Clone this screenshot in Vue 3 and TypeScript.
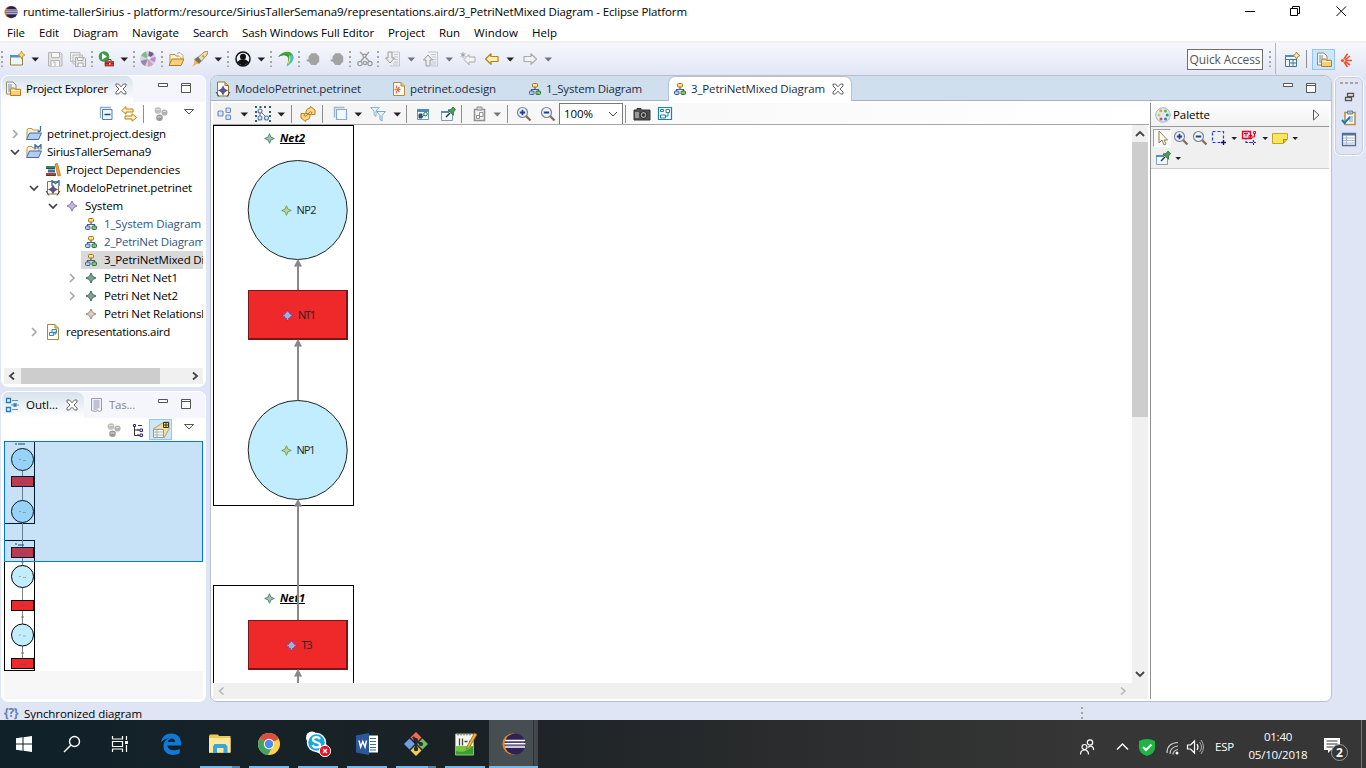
<script setup lang="ts">
interface Tool { kind: string; gap: number; off?: boolean }
interface Row { text: string; width: number; depth: number; arrow: '' | 'open' | 'closed'; icon: string; tone?: string }
interface Task { icon: string; running?: boolean; active?: boolean; stacked?: boolean }

// Spreads or tightens the letters so that a label takes the given width.
const vFit = {
  mounted(el: HTMLElement, binding: { value: number }) {
    const natural = el.getBoundingClientRect().width
    const count = (el.textContent ?? '').length
    if (count > 0) el.style.letterSpacing = `${(binding.value - natural) / count}px`
  },
}

const parse = (spec: string): Tool[] =>
  spec.split(' ').map((part) => {
    const [gap, kind, off] = part.split(':')
    return { gap: Number(gap), kind, off: off === 'off' }
  })

const menus: [string, number][] = [
  ['File', 18], ['Edit', 20], ['Diagram', 45], ['Navigate', 47], ['Search', 35],
  ['Sash Windows Full Editor', 132], ['Project', 37], ['Run', 21], ['Window', 44], ['Help', 25],
]

const mainTools = parse(
  '0:grip 5:new 6:caret 8:save 7:saveall 5:grip 4:run 6:caret 5:grip 4:sphere 5:grip 4:folder 8:rocket 6:caret 5:grip 5:person 6:caret 5:grip 5:swirl 4:grip 4:hex 8:hex 4:grip 5:cut 4:grip 5:down 6:caret:off 8:up 6:caret:off 7:backstar 8:back 6:caret 8:forward 6:caret:off',
)
const diagramTools = parse(
  '4:arrange 7:caret 7:select 6:caret 6:sep 8:refresh 6:sep 10:layers 5:caret 8:filter 7:caret 5:sep 9:hidden 8:pin 5:sep 10:paste:off 5:caret:off 6:sep 8:zoomin 8:zoomout',
)
const paletteTools = parse('0:cursor 2:zoomin 3:zoomout 3:marquee 4:caret 4:marqueered 5:caret 4:note 4:caret')

const rows: Row[] = [
  { text: 'petrinet.project.design', width: 119, depth: 0, arrow: 'closed', icon: 'projectj' },
  { text: 'SiriusTallerSemana9', width: 104, depth: 0, arrow: 'open', icon: 'projectm' },
  { text: 'Project Dependencies', width: 114, depth: 1, arrow: '', icon: 'books' },
  { text: 'ModeloPetrinet.petrinet', width: 126, depth: 1, arrow: 'open', icon: 'modelm' },
  { text: 'System', width: 38, depth: 2, arrow: 'open', icon: 'starpurple' },
  { text: '1_System Diagram', width: 97, depth: 3, arrow: '', icon: 'tree', tone: 'link' },
  { text: '2_PetriNet Diagram', width: 101, depth: 3, arrow: '', icon: 'tree', tone: 'link' },
  { text: '3_PetriNetMixed Diagram', width: 134, depth: 3, arrow: '', icon: 'tree', tone: 'selected' },
  { text: 'Petri Net Net1', width: 74, depth: 3, arrow: 'closed', icon: 'stargreen' },
  { text: 'Petri Net Net2', width: 74, depth: 3, arrow: 'closed', icon: 'stargreen' },
  { text: 'Petri Net Relationship', width: 114, depth: 3, arrow: '', icon: 'startan' },
  { text: 'representations.aird', width: 104, depth: 1, arrow: 'closed', icon: 'aird' },
]

const editors = [
  { text: 'ModeloPetrinet.petrinet', width: 126, icon: 'model', cell: 'e1' },
  { text: 'petrinet.odesign', width: 86, icon: 'odesign', cell: 'e2' },
  { text: '1_System Diagram', width: 96, icon: 'tree', cell: 'e3' },
  { text: '3_PetriNetMixed Diagram', width: 134, icon: 'tree', cell: 'e4' },
]

const tasks: Task[] = [
  { icon: 'edge' },
  { icon: 'explorer', running: true, stacked: true },
  { icon: 'chrome', running: true },
  { icon: 'skype', running: true },
  { icon: 'word', running: true },
  { icon: 'git', running: true, stacked: true },
  { icon: 'npp', running: true },
  { icon: 'eclipse', running: true, active: true },
]

const miniCircles = [18.5, 70.5, 135.5, 194]
const miniRects = [36, 107, 159.5, 218]
</script>

<template>
  <div class="window">
    <svg class="sprite" aria-hidden="true">
      <symbol id="caret" viewBox="0 0 8 16"><path d="M.500 6.500H8L4.250 10.600z" fill="#222" /></symbol>
      <symbol id="grip" viewBox="0 0 3 16"><path d="M0 0h2v2H0zM0 5h2v2H0zM0 10h2v2H0zM0 14.500h2v1.500H0z" fill="#a8a49c" /></symbol>
      <symbol id="eclipse" viewBox="0 0 24 24"><circle cx="11" cy="12" r="10.500" fill="#f08b1d" /><circle cx="13" cy="12" r="10.500" fill="#2c2255" /><path d="M3 8.500h20M2.500 11.700h21M3 15h20" stroke="#fff" stroke-width="1.500" /><path d="M3.500 10h19M3.500 13.400h19" stroke="#9188b5" stroke-width=".7" /></symbol>
      <symbol id="new" viewBox="0 0 16 16"><path d="M1.500 4.500h12v9.500h-12z" fill="#edf6fd" stroke="#9b8347" /><path d="M1 4h10v2.500H1z" fill="#4d91cb" /><path d="M12.500 0l1.200 2.700L16 4l-2.300 1.200L12.500 8l-1.200-2.800L9 4l2.300-1.300z" fill="#f9dc73" stroke="#b98a1d" stroke-width=".8" /></symbol>
      <symbol id="save" viewBox="0 0 16 16"><path d="M1.500 1.500h12l1.500 1.500v12H1.500z" fill="#e2e2e2" stroke="#b4b4b4" /><path d="M4.500 1.500h8v5h-8zM4 15V9.500h8.500V15M6 11h2v4" fill="#f7f7f7" stroke="#b4b4b4" /></symbol>
      <symbol id="saveall" viewBox="0 0 16 16"><path d="M.500 1.500h9.500v9H.500zM3 4h9.500v9H3z" fill="#eee" stroke="#bbb" /><path d="M5.500 6.500h9l1 1v8h-10z" fill="#e7e7e7" stroke="#aaa" /><path d="M7.500 6.500h5.500v3H7.500zM8 15.500V12h5v3.500" fill="#fafafa" stroke="#aaa" /></symbol>
      <symbol id="run" viewBox="0 0 16 16"><circle cx="6" cy="5.500" r="5.300" fill="#3a9b48" /><path d="M4 2.200l5 3.300-5 3.200z" fill="#fff" /><path d="M7 10.500h9V15H7z" fill="#d83a32" stroke="#9c1a1a" stroke-width=".7" /><path d="M10 10V8.500h3V10M7 12.500h9" fill="none" stroke="#8b2620" /><path d="M11 12h1.500v1.500H11z" fill="#fff" /></symbol>
      <symbol id="sphere" viewBox="0 0 16 16"><circle cx="8" cy="8" r="7.800" fill="#d7cede" /><path d="M8 8L1 4.500A8 8 0 0 1 6 .5z" fill="#84b98c" /><path d="M8 8L9 .3a8 8 0 0 1 5 3z" fill="#6e5c98" /><path d="M8 8l7.600-2a8 8 0 0 1-1 5z" fill="#b989cf" /><path d="M8 8l5 5.500a8 8 0 0 1-5 2.200z" fill="#cfa0b1" /><path d="M8 8l-3 7A8 8 0 0 1 .5 10z" fill="#8e8bad" /><circle cx="9" cy="7" r="1.800" fill="#f8eef5" /></symbol>
      <symbol id="folder" viewBox="0 0 16 16"><path d="M2 13V3.500h5l1 1.500h5v4" fill="#fff5d5" stroke="#b98c37" /><path d="M9 2.500l3-1 3 3v4" fill="#f7f7f7" stroke="#a88c4c" stroke-width=".7" /><path d="M1 14.500L4 8h12l-3 6.500z" fill="#f8cf79" stroke="#b67b23" /></symbol>
      <symbol id="rocket" viewBox="0 0 16 16"><path d="M5.500 7L12 1l4-1-1 4-6 6.500z" fill="#f3dba1" stroke="#ad762c" stroke-width=".8" /><path d="M6 5.500L9.500 10 7 13 2 8.500z" fill="#75736d" /><path d="M2.500 9l4.500 4-3 .3-4 2.700 2-3.500z" fill="#f3b544" /><path d="M10.500 4.500l1.500 1.500" stroke="#57a4cf" stroke-width="1.600" /></symbol>
      <symbol id="person" viewBox="0 0 16 16"><circle cx="8" cy="8" r="7" fill="#eef1fa" stroke="#111" stroke-width="1.500" /><circle cx="8" cy="5.800" r="3" fill="#111" /><path d="M2.700 12c0-5 10.600-5 10.600 0L8 15z" fill="#111" /></symbol>
      <symbol id="swirl" viewBox="0 0 16 16"><path d="M0 6C4 0 13-1 14.500 4c1 4-1 8-6 11 2-4 2-7 1-9C7 3 4 4 0 6z" fill="#48a531" /><path d="M14 3c4 3 0 10-5.500 12.500C12 11 12 8 12 5z" fill="#43b7d9" /><path d="M0 6c4-3 8-3 10-1-3-1-6-1-10 1z" fill="#28703d" /><path d="M11.500 4c2 3 1 7-2 10 1-4 2-7 2-10z" fill="#f4e83e" /></symbol>
      <symbol id="hex" viewBox="0 0 16 16"><path d="M6.500 2.200h4.600l3.100 3.400v5l-3.100 3.400H6.500l-3-3.400H1.700V8.500h1.800V5.600z" fill="#a3a3a3" /></symbol>
      <symbol id="cut" viewBox="0 0 16 16"><path d="M3 1l9 9M12 1L4 10" stroke="#999" stroke-width="1.300" /><g fill="#eee" stroke="#999" stroke-width="1.200"><circle cx="7.500" cy="4.800" r="1.600" /><circle cx="3" cy="12.500" r="2.200" /><circle cx="8" cy="12" r="1.700" /><circle cx="13" cy="12.500" r="2.200" /></g></symbol>
      <symbol id="down" viewBox="0 0 16 16"><path d="M7 1h7.500v14H5M9 3.500h4M9 6h4M9 8.500h4M9 11h4M8 13h5" fill="none" stroke="#c6c6c6" /><path d="M3 1h4v6h2.500L5 12 .5 7H3z" fill="#eee" stroke="#999" /></symbol>
      <symbol id="up" viewBox="0 0 16 16"><path d="M5 1h9.500v14H8M8 3.500h5M9 6h4M9 8.500h4M9 11h4M8 13h5" fill="none" stroke="#c6c6c6" /><path d="M3 15h4V9h2.500L5 4 .5 9H3z" fill="#eee" stroke="#999" /></symbol>
      <symbol id="back" viewBox="0 0 16 16"><path d="M1.500 8L7 2.800V5.500h7v5H7v2.700z" fill="#fff2bd" stroke="#bd7f0d" stroke-linejoin="round" stroke-width="1.200" /></symbol>
      <symbol id="backstar" viewBox="0 0 16 16"><path d="M4 8.500l5-5V6h6v5H9v2.700z" fill="#f3f3f5" stroke="#aaa" stroke-linejoin="round" /><path d="M3 1v6M.5 2.500l5 3M5.500 2.500l-5 3" stroke="#999" stroke-width=".9" /></symbol>
      <symbol id="forward" viewBox="0 0 16 16"><path d="M14.500 8L9 2.800V5.500H2v5h7v2.700z" fill="#f3f3f5" stroke="#aaa" stroke-linejoin="round" stroke-width="1.200" /></symbol>
      <symbol id="explorerview" viewBox="0 0 16 16"><path d="M1.500 1h6.500l3 3v9H1.500z" fill="#f4f4f4" stroke="#9a8a62" /><path d="M3 4h4M3 6h4M3 8h3M3 10h2" stroke="#5c90bd" /><path d="M5.500 14.500V8.300l1-1.300h3l1 1.300h5v6.200z" fill="#f8d078" stroke="#b67b23" /><path d="M6 9.500h9" stroke="#fff3ce" /></symbol>
      <symbol id="close" viewBox="0 0 12 12"><path d="M1 1h2.500L6 3.800 8.500 1H11v2L8 6l3 3v2H8.500L6 8.200 3.500 11H1V9l3-3-3-3z" fill="#fff" stroke="#555" stroke-width=".9" /></symbol>
      <symbol id="min" viewBox="0 0 12 12"><path d="M1.500 1.500h9v3h-9z" fill="#fff" stroke="#555" /></symbol>
      <symbol id="max" viewBox="0 0 12 12"><path d="M1.500 1.500h9v9h-9zM1.500 3.500h9" fill="#fff" stroke="#555" /></symbol>
      <symbol id="collapse" viewBox="0 0 16 16"><path d="M2.500 12V1.500H13" fill="none" stroke="#88add2" stroke-width="1.300" /><path d="M4.500 3.500h9.500v10H4.500z" fill="#eff7fd" stroke="#4f7eaf" /><path d="M6.500 8.500h6" stroke="#174c89" stroke-width="1.500" /></symbol>
      <symbol id="linkarrows" viewBox="0 0 16 16"><path d="M.700 4.500L5 .700V3h7v3H5v2.200zM15.500 11.500L11 7.700V10H4v3h7v2.200z" fill="#fff2c4" stroke="#bd7f0d" stroke-linejoin="round" /></symbol>
      <symbol id="balls" viewBox="0 0 16 16"><circle cx="5" cy="4.500" r="3.300" fill="#bfbfbf" /><circle cx="11.500" cy="6.500" r="3.100" fill="#b2b2b2" /><circle cx="6.500" cy="11.800" r="3.300" fill="#999" /><path d="M3 3.500h4M10 5.500h3M4.500 11h4" stroke="#ddd" /></symbol>
      <symbol id="viewmenu" viewBox="0 0 12 12"><path d="M1.500 3.500h9L6 8z" fill="#fff" stroke="#555" /></symbol>
      <symbol id="projectj" viewBox="0 0 16 16"><path d="M1 12V4l1-1.500h4L7 4h6v4" fill="#fff2cb" stroke="#bb9654" /><path d="M.500 13.500l3-6.500h12l-3 6.500z" fill="#b2cdf0" stroke="#3e6caf" /><path d="M14.500 0v4q0 2-3 1.200" fill="none" stroke="#3674b2" stroke-width="1.300" /></symbol>
      <symbol id="projectm" viewBox="0 0 16 16"><path d="M1 12V4l1-1.500h4L7 4h6v4" fill="#fff2cb" stroke="#bb9654" /><path d="M.500 13.500l3-6.500h12l-3 6.500z" fill="#b2cdf0" stroke="#3e6caf" /><path d="M9 5.500V.5l3 3 3-3v5" fill="none" stroke="#3674b2" stroke-width="1.300" /></symbol>
      <symbol id="books" viewBox="0 0 16 16"><path d="M1 4h9v3H1z" fill="#2f8668" /><path d="M3 7.500h7v3H3z" fill="#376fa0" /><path d="M1 11h10v3H1z" fill="#b14134" /><path d="M1 6.500h9M1 13.500h9" stroke="#533b2f" /><path d="M10 2l2.500-.5 3 12-2.500.5z" fill="#f4a72e" stroke="#a56718" stroke-width=".7" /></symbol>
      <symbol id="model" viewBox="0 0 16 16"><path d="M2.500 1h7.500l3.500 3.500V15h-11z" fill="#fffdf5" stroke="#95742e" /><path d="M10 1v3.500h3.500" fill="#e5bb62" stroke="#95742e" /><path d="M8 4.500l1.800 3.200L13 9.500l-3.200 1.800L8 14.500l-1.800-3.200L3 9.500l3.200-1.800z" fill="#605486" /><path d="M1 11l3 4.500M15 11l-3 4.500" stroke="#444" /></symbol>
      <symbol id="modelm" viewBox="0 0 16 16"><path d="M2.500 1.500h11V14h-11z" fill="#fffdf5" stroke="#95742e" /><path d="M7 6V.5l3.500 3 3.500-3V6" fill="#fff" stroke="#3674b2" stroke-width="1.400" /><path d="M8 4.500l1.800 3.200L13 9.500l-3.200 1.800L8 14.500l-1.800-3.200L3 9.500l3.200-1.800z" fill="#605486" /><path d="M1 11l3 4.500M15 11l-3 4.500" stroke="#444" /></symbol>
      <symbol id="odesign" viewBox="0 0 16 16"><path d="M2.500 1.500H10l3.500 3.500v9.500h-11z" fill="#fffdf5" stroke="#b88938" /><path d="M10 1.500v3.500h3.500" fill="#edc76f" stroke="#b88938" /><path d="M3.500 8.500h6M6 8.500L8.500 6M6 8.500L8.500 11M5.500 7V4.500M5.500 10v2.500" stroke="#e8694b" stroke-width="1.300" /></symbol>
      <symbol id="aird" viewBox="0 0 16 16"><path d="M2.500.500H10L13.500 4v11.500h-11z" fill="#fffdf5" stroke="#a78747" /><path d="M10 .500V4h3.500" fill="#edc76f" stroke="#a78747" /><path d="M7 5.500h4.500v3H7zM4.500 8.500h4v3h-4zM8.500 10H11V7" fill="#dcf1fa" stroke="#3a87ad" /></symbol>
      <symbol id="tree" viewBox="0 0 16 16"><path d="M8 5v4M4.500 11V8.500h7V11" fill="none" stroke="#4a5c83" stroke-width="1.200" /><rect x="5.500" y="2.500" width="5" height="3.500" rx="1" fill="#ffe58b" stroke="#a3731c" /><rect x="2.500" y="10" width="4.500" height="3.500" rx="1" fill="#b8ccf1" stroke="#385c9c" /><rect x="9" y="10" width="4.500" height="3.500" rx="1" fill="#83c66c" stroke="#2b713b" /></symbol>
      <symbol id="starpurple" viewBox="0 0 16 16"><path d="M8 3l1.600 3.400L13 8 9.600 9.600 8 13 6.400 9.600 3 8l3.400-1.600z" fill="#c3b8dc" stroke="#8d78b5" /></symbol>
      <symbol id="stargreen" viewBox="0 0 16 16"><path d="M8 3l1.600 3.400L13 8 9.600 9.600 8 13 6.400 9.600 3 8l3.400-1.600z" fill="#8a9e97" stroke="#34725c" /></symbol>
      <symbol id="startan" viewBox="0 0 16 16"><path d="M8 3l1.600 3.400L13 8 9.600 9.600 8 13 6.400 9.600 3 8l3.400-1.600z" fill="#d6cdc8" stroke="#a38a79" /></symbol>
      <symbol id="starnet" viewBox="0 0 12 12"><path d="M6 1.200l1.400 3.400L10.800 6 7.400 7.400 6 10.800 4.600 7.400 1.200 6l3.400-1.400z" fill="#b5b9b5" stroke="#468f73" /></symbol>
      <symbol id="starplace" viewBox="0 0 12 12"><path d="M6 1.200l1.400 3.400L10.800 6 7.400 7.400 6 10.800 4.600 7.400 1.200 6l3.400-1.400z" fill="#c4cbb8" stroke="#7ba735" /></symbol>
      <symbol id="startrans" viewBox="0 0 12 12"><path d="M6 1.300l2.200 2.500L10.700 6 8.200 8.200 6 10.700 3.800 8.200 1.300 6l2.500-2.200z" fill="#a9b1c8" /><path d="M6 1.200l2 2.800L10.800 6 8 8 6 10.800 4 8 1.200 6 4 4z" fill="none" stroke="#3437e8" stroke-dasharray="1.200 1" /></symbol>
      <symbol id="arrange" viewBox="0 0 16 16"><g fill="#d7e5f5" stroke="#6f8fb8" stroke-width="1.200"><rect x="1" y="5" width="5" height="5" rx="1" /><rect x="9" y="2" width="4.500" height="4.500" rx="1" /><rect x="9" y="9" width="4.500" height="4.500" rx="1" /></g></symbol>
      <symbol id="select" viewBox="0 0 16 16"><path d="M0 0h2v2H0zM4.500 0h2v2h-2zM9 0h2v2H9zM14 0h2v2h-2zM0 5h2v2H0zM14 5h2v2h-2zM0 9h2v2H0zM14 9h2v2h-2zM0 14h2v2H0zM14 14h2v2h-2z" fill="#31598d" /><path d="M5 5l7 7M5 6v6" stroke="#657b9c" /><g fill="#e1ebf7" stroke="#60799d" stroke-width="1.100"><circle cx="5" cy="5" r="2" /><circle cx="5" cy="12" r="2" /><circle cx="11.500" cy="12" r="2" /></g></symbol>
      <symbol id="refresh" viewBox="0 0 16 16"><path d="M6 7.500Q5.500 2.500 10 2l.5-1.500L15 4v4.500h-4.500L12 6.500Q9.500 4.500 9 7.500z" fill="#fbd67d" stroke="#ad7419" stroke-width=".9" stroke-linejoin="round" /><path d="M10 8.500q.5 5-4 5.500l-.5 1.500L1 12V7.500h4.500L4 9.500Q6.500 11.500 7 8.500z" fill="#fbd67d" stroke="#ad7419" stroke-width=".9" stroke-linejoin="round" /></symbol>
      <symbol id="layers" viewBox="0 0 16 16"><path d="M1.500 11.500v-10h10" fill="none" stroke="#a2b4cb" stroke-width="1.400" /><path d="M3.500 3.500h10v10h-10z" fill="#eff9ff" stroke="#8ea9c7" stroke-width="1.200" /></symbol>
      <symbol id="filter" viewBox="0 0 16 16"><path d="M.700 1.500h8.500L6 5v5.500L4 9V5z" fill="#e5f4fd" stroke="#8ab5d6" /><path d="M6.500 5.500h9L12 9.500V15l-2-1.500v-4z" fill="#e5f4fd" stroke="#74a8ce" /></symbol>
      <symbol id="hidden" viewBox="0 0 16 16"><path d="M1.500 3.500h11v10h-11z" fill="#edf8fe" stroke="#6699b9" /><path d="M1 3h12v3H1z" fill="#4a8dba" /><path d="M3 8h3v4H3zM5 12l4.500-4" fill="#334e7c" stroke="#334e7c" /><circle cx="9.500" cy="8" r="1.800" fill="#d6efda" stroke="#2f8548" /></symbol>
      <symbol id="pin" viewBox="0 0 16 16"><path d="M1.500 5.500h11v9h-11z" fill="#f1f8ff" stroke="#819eb5" /><path d="M1 5h8v2H1z" fill="#4d91b9" /><path d="M6 11l4-4" stroke="#333" stroke-width="1.500" /><path d="M8 4l3-.500L13 1l2.500 2.500L13.500 6v3.200z" fill="#4c9d57" stroke="#286a38" stroke-width=".8" /></symbol>
      <symbol id="paste" viewBox="0 0 16 16"><path d="M2.500 3.500h10v11h-10z" fill="#f2f2f2" stroke="#777" stroke-width="1.500" /><path d="M5 1h5v3H5z" fill="#ccc" stroke="#777" /><path d="M7.500 6.500H11v4H7.500zM4.500 9.500h3v3h-3z" fill="#fff" stroke="#777" /></symbol>
      <symbol id="zoomin" viewBox="0 0 16 16"><path d="M10 10l4.500 4.500" stroke="#8b6955" stroke-width="2.300" /><circle cx="6.500" cy="6.500" r="5" fill="#eff7fd" stroke="#7a8796" stroke-width="1.200" /><path d="M3.800 6.500h5.400M6.500 3.800v5.400" stroke="#2838a5" stroke-width="1.800" /></symbol>
      <symbol id="zoomout" viewBox="0 0 16 16"><path d="M10 10l4.500 4.500" stroke="#8b6955" stroke-width="2.300" /><circle cx="6.500" cy="6.500" r="5" fill="#eff7fd" stroke="#7a8796" stroke-width="1.200" /><path d="M3.800 6.500h5.400" stroke="#2838a5" stroke-width="1.800" /></symbol>
      <symbol id="camera" viewBox="0 0 18 16"><path d="M1 4h3V2.500h4V4h9v10H1z" fill="#515151" stroke="#333" /><path d="M2 6h4v6H2z" fill="#999" /><circle cx="10.500" cy="9" r="3.500" fill="#aaa" stroke="#222" /><circle cx="10.500" cy="9" r="1.700" fill="#333" /></symbol>
      <symbol id="layout" viewBox="0 0 16 16"><path d="M1.500 1.500h13v12h-13z" fill="#eff9fd" stroke="#2481a5" stroke-width="1.200" /><path d="M3.500 3.500h3v2h-3zM9 3.500h3.500v3H9zM3.500 9h5v3h-5zM11 6.500V10H8.500" fill="#fff" stroke="#2481a5" /></symbol>
      <symbol id="palette" viewBox="0 0 16 16"><circle cx="8" cy="8" r="7.300" fill="#dcebf7" stroke="#9bb9d5" /><circle cx="5.800" cy="3.700" r="1.500" fill="#ef9f20" /><circle cx="10.500" cy="4" r="1.500" fill="#6fb634" /><circle cx="4" cy="8" r="1.500" fill="#f1c42d" /><circle cx="12.300" cy="8" r="1.500" fill="#299d53" /><circle cx="6" cy="12" r="1.500" fill="#dc4e3d" /><circle cx="10.500" cy="12" r="1.500" fill="#4e6fc9" /></symbol>
      <symbol id="cursor" viewBox="0 0 16 16"><path d="M5 1v12l3-3 2 5 2-1-2-4h3.500z" fill="#fffde7" stroke="#8c8062" /></symbol>
      <symbol id="marquee" viewBox="0 0 16 16"><path d="M1.500 1.500h11v11h-11z" fill="none" stroke="#1740ed" stroke-dasharray="3 2" stroke-width="1.200" /><path d="M12.500 10v5M10 12.500h5" stroke="#24006c" stroke-width="1.300" /></symbol>
      <symbol id="marqueered" viewBox="0 0 16 16"><path d="M1.500 1.500h8v7h-8z" fill="#dfdef5" stroke="#f00022" stroke-width="1.300" /><path d="M3 3.500h4M5 3.500v3M8 5.500h3v3H8zM11.500 7h2V3M12.500 1.500h2v2h-2z" fill="none" stroke="#dd0028" /><path d="M5 13V9.500M5 12.500h5M12.500 10v5M10 12.500h5" stroke="#1737d3" stroke-width="1.200" stroke-dasharray="2 1" /></symbol>
      <symbol id="note" viewBox="0 0 16 16"><path d="M.500 3.500h15V9l-4 4.500H.500z" fill="#fae65a" stroke="#c3a52e" /><path d="M11.500 13V9.500h3.500" fill="#ddc02c" stroke="#a58c24" /></symbol>
      <symbol id="outline" viewBox="0 0 16 16"><path d="M1.500 1.500h4v4h-4zM1.500 10.500h4v4h-4zM9 7h2v2H9z" fill="#e4f3ff" stroke="#297ab6" stroke-width="1.300" /><path d="M7 3.500h6M7 12.500h6M6 8h3M12 8h2" stroke="#4f99cb" /></symbol>
      <symbol id="tasklist" viewBox="0 0 16 16"><path d="M2.500 1.500h10v12l-2 1-2-1-2 1-4-1z" fill="#eef0f8" stroke="#9a9cab" /><path d="M4.500 4h6M4.500 6h6M4.500 8h6M4.500 10h6M4.500 12h4" stroke="#9292aa" /></symbol>
      <symbol id="hier" viewBox="0 0 16 16"><path d="M4.500 3v10.500H10M4.500 8H10" fill="none" stroke="#333" /><path d="M3.500 2.500h2v2h-2zM10 7h2.500v2.500H10zM10 12h2.500v2.500H10z" fill="#e7e6ff" stroke="#332f7a" /><path d="M8 3.500h4M7 8h2M7 13h2" stroke="#333" /></symbol>
      <symbol id="overview" viewBox="0 0 18 18"><path d="M1 8L12 1h5v7l-5 9z" fill="#eadfa4" stroke="#b1a477" /><path d="M1.500 8.500h10v8h-10z" fill="#fff" stroke="#999" /><path d="M2 11h9M2 14h9M5 9v8" stroke="#aaa" /><path d="M11.500 1.500h5v5h-5z" fill="#ffe337" stroke="#333" /><path d="M11 4h6M14 1v6" stroke="#333" /></symbol>
      <symbol id="perspective" viewBox="0 0 16 16"><path d="M1.500 3.500h11v11h-11zM1.500 7.500h11M5.500 7v7M9 7v7M5.500 11h7" fill="#eef7fc" stroke="#4b7599" /><path d="M1 3h9v2H1z" fill="#4f8dbf" /><path d="M12.500 0l1.200 2.300L16 3.500l-2.300 1.200L12.500 7l-1.200-2.300L9 3.500l2.300-1.200z" fill="#fff1ac" stroke="#ad8630" /></symbol>
      <symbol id="sirius" viewBox="0 0 16 16"><circle cx="3.500" cy="8.500" r="1.600" fill="#f0512d" /><path d="M5 7L8.500 1.800M6 8l5-4M6.500 8.500H13M6 9.500l5 3.500M5 10l3.500 5" stroke="#f0512d" stroke-width="1.600" /></symbol>
      <symbol id="restoretrim" viewBox="0 0 12 12"><path d="M4.500 2.500h6v3h-6zM2.500 6.500h6v3h-6z" fill="#fff" stroke="#555" stroke-width="1.300" /></symbol>
      <symbol id="clip" viewBox="0 0 16 16"><path d="M4 2.500h10v12H4z" fill="#fff" stroke="#b98a42" stroke-width="1.500" /><path d="M6.500 1h5v3h-5z" fill="#aebdcc" stroke="#6d8191" /><path d="M8 7h4M8 9h4M8 11h4" stroke="#7296b9" /><path d="M1 10l2.500 3L9 7" fill="none" stroke="#177bb7" stroke-width="2" /></symbol>
      <symbol id="table" viewBox="0 0 16 16"><path d="M1.500 2.500h13v12h-13z" fill="#fff" stroke="#526d91" stroke-width="1.300" /><path d="M1 2h14v2.500H1z" fill="#52729b" /><path d="M2 7h12M2 9.500h12M2 12h12M5.500 5v9" stroke="#a9b8d1" /></symbol>
      <symbol id="chevright" viewBox="0 0 10 10"><path d="M3 1l4 4-4 4" fill="none" stroke="#a6a6a6" stroke-width="1.600" /></symbol>
      <symbol id="chevdown" viewBox="0 0 10 10"><path d="M1 3l4 4 4-4" fill="none" stroke="#404040" stroke-width="1.700" /></symbol>
      <symbol id="win" viewBox="0 0 24 24"><path d="M4 6.200l6.500-.9v6.200H4zM11.500 5.200L20 4v7.500h-8.500zM4 12.500h6.500v6.200L4 17.800zM11.500 12.500H20V20l-8.500-1.200z" fill="#fff" /></symbol>
      <symbol id="search" viewBox="0 0 24 24"><circle cx="14.500" cy="9.500" r="5" fill="none" stroke="#fff" stroke-width="1.400" /><path d="M11 13l-7 7" stroke="#fff" stroke-width="1.400" /></symbol>
      <symbol id="taskview" viewBox="0 0 24 24"><path d="M4.500 4v3h10V4M4.500 20v-3h10v3M4.500 9.500h10v5h-10zM18.500 4v4M18.500 13v7" fill="none" stroke="#fff" stroke-width="1.200" /><path d="M17 9h3v3h-3z" fill="#fff" /></symbol>
      <symbol id="edge" viewBox="0 0 24 24"><path d="M2 10.500C3 4.500 7 1.500 12.500 1.500c6 0 9.500 4.300 9.500 9.500v2.500H8.500c.5 5.500 7.500 6 12.200 3.200v4.500C14 25 4.500 22.500 4.500 14c0-4 2.500-6.500 5.500-7.500-3 .200-6 1.200-8 4zM8.800 10h7.400c0-4.700-6.500-4.700-7.400 0z" fill="#0c7bd9" /></symbol>
      <symbol id="explorer" viewBox="0 0 24 24"><path d="M1 4l1-1.500h8L11 4h11.500v17H1z" fill="#f4c64e" /><path d="M1 6h21.500v14H1z" fill="#fde99b" /><path d="M5 21v-6.500L6.500 12h11l2 2.500V21h-4v-5H9v5z" fill="#37a6dc" /></symbol>
      <symbol id="chrome" viewBox="0 0 24 24"><circle cx="12" cy="12" r="11" fill="#ffd24c" /><path d="M12 12L2.500 6.500A11 11 0 0 1 21.700 7z" fill="#d94f40" /><path d="M2.500 6.500A11 11 0 0 0 11 23l5-9z" fill="#45a45b" /><circle cx="12" cy="12" r="5.200" fill="#fff" /><circle cx="12" cy="12" r="4.200" fill="#4c8bef" /></symbol>
      <symbol id="skype" viewBox="0 0 26 26"><circle cx="7" cy="6.500" r="6" fill="#fff" /><circle cx="15.500" cy="16" r="6.500" fill="#fff" /><circle cx="11.500" cy="11.500" r="9.700" fill="#fff" /><circle cx="11.500" cy="11.500" r="8.300" fill="#16a8e5" /><path d="M15 8c-2-3-7-2-7 .5 0 3.500 7 2 7 5.500 0 3-6 3.500-7.500 0" fill="none" stroke="#fff" stroke-width="2.300" /><circle cx="20" cy="20" r="5.700" fill="#e81123" stroke="#fff" /><path d="M18 18l4 4M22 18l-4 4" stroke="#fff" stroke-width="1.400" /></symbol>
      <symbol id="word" viewBox="0 0 24 24"><path d="M12 3.500h11v17H12z" fill="#fff" /><path d="M15 6.500h6M15 9.500h6M15 12.500h6M15 15.500h6M15 18h6" stroke="#3d68aa" stroke-width="1.200" /><path d="M1 3.500L14 1v22L1 20.500z" fill="#2c5798" /><path d="M4 8.500l1.600 6.500 2.200-5.500 2.200 5.500 1.500-6.500" fill="none" stroke="#fff" stroke-width="1.500" /></symbol>
      <symbol id="git" viewBox="0 0 24 24"><path d="M12 0l5.500 5.500L12 11 6.500 5.500z" fill="#f2695b" /><path d="M18.500 6.500L24 12l-5.500 5.500L13 12z" fill="#72bb61" /><path d="M5.500 6.500L11 12l-5.500 5.500L0 12z" fill="#6e9de8" /><path d="M12 13l5.500 5.500L12 24l-5.500-5.500z" fill="#f6d04d" /><path d="M9 5l3 3v9M12 9l5 3" stroke="#27292b" stroke-width="2" /><g fill="#27292b"><circle cx="12" cy="8" r="2" /><circle cx="17" cy="12" r="2" /><circle cx="12" cy="17" r="2.200" /></g></symbol>
      <symbol id="npp" viewBox="0 0 24 24"><path d="M2.500 2h18v21h-18z" fill="#f7f8f0" stroke="#a3aa9b" /><path d="M3 14h17v8.500H3z" fill="#6fc842" /><path d="M3 19q9 3 17-5v8.500H3z" fill="#35a02c" /><path d="M5 1v2.500M8 1v2.500M11 1v2.500M14 1v2.500M17 1v2.500" stroke="#666" /><path d="M6.500 6.500v7M9.500 6.500v7M11.500 9.500h3M16 9.500h2" stroke="#444" stroke-width="1.300" /><path d="M13.500 17.500l.8-3.500L21.500 1 24 2.500l-7.500 12.700z" fill="#f0b533" stroke="#99631c" stroke-width=".8" /></symbol>
    </svg>

    <header class="title">
      <svg class="app-icon"><use href="#eclipse" /></svg>
      <span v-fit="664" class="title-text">runtime-tallerSirius - platform:/resource/SiriusTallerSemana9/representations.aird/3_PetriNetMixed Diagram - Eclipse Platform</span>
      <svg class="win-buttons" viewBox="0 0 110 20" fill="none" stroke="#000">
        <path d="M1 9.500h10M46.500 6.500h7v7h-7zM48.500 6.500v-2h7v7h-2M92.500 4.500l9.500 9.500M102 4.500L92.500 14" />
      </svg>
    </header>

    <nav class="menu">
      <span v-for="[name, width] in menus" :key="name" v-fit="width">{{ name }}</span>
    </nav>

    <div class="main-bar">
      <div class="tools">
        <svg v-for="(t, i) in mainTools" :key="i" :class="['ic', t.kind, { off: t.off }]" :style="{ marginLeft: t.gap + 'px' }"><use :href="'#' + t.kind" /></svg>
      </div>
      <div class="right-tools">
        <div class="quick"><span v-fit="71">Quick Access</span></div>
        <svg class="ic grip"><use href="#grip" /></svg>
        <div class="perspectives">
          <svg class="ic"><use href="#perspective" /></svg>
          <i class="sep"></i>
          <div class="pressed"><svg class="ic"><use href="#explorerview" /></svg></div>
          <svg class="ic"><use href="#sirius" /></svg>
        </div>
      </div>
    </div>

    <main class="work">
      <div class="left">
        <section class="view explorer">
          <div class="view-tabs">
            <div class="view-tab active t-explorer">
              <svg class="ic"><use href="#explorerview" /></svg><span v-fit="82">Project Explorer</span><svg class="small"><use href="#close" /></svg>
            </div>
            <div class="view-buttons"><svg class="small"><use href="#min" /></svg><svg class="small"><use href="#max" /></svg></div>
          </div>
          <div class="view-tools">
            <svg class="ic"><use href="#collapse" /></svg>
            <svg class="ic g7"><use href="#linkarrows" /></svg>
            <i class="sep g6"></i>
            <svg class="ic g9"><use href="#balls" /></svg>
            <svg class="small g14"><use href="#viewmenu" /></svg>
          </div>
          <div class="rows">
            <div v-for="r in rows" :key="r.text" :class="['row', 'd' + r.depth]">
              <svg class="twisty"><use v-if="r.arrow" :href="r.arrow === 'open' ? '#chevdown' : '#chevright'" /></svg>
              <div :class="['label', r.tone]">
                <svg class="ic"><use :href="'#' + r.icon" /></svg><span v-fit="r.width">{{ r.text }}</span>
              </div>
            </div>
          </div>
          <div class="hscroll">
            <svg viewBox="0 0 17 16"><path d="M10 4.500L6 8l4 3.500" fill="none" stroke="#444" stroke-width="1.800" /></svg>
            <i class="thumb"></i>
            <svg viewBox="0 0 17 16"><path d="M7 4.500L11 8l-4 3.500" fill="none" stroke="#444" stroke-width="1.800" /></svg>
          </div>
        </section>

        <section class="view outline">
          <div class="view-tabs">
            <div class="view-tab active t-outline">
              <svg class="ic"><use href="#outline" /></svg><span v-fit="32">Outl...</span><svg class="small"><use href="#close" /></svg>
            </div>
            <div class="view-tab dim"><svg class="ic"><use href="#tasklist" /></svg><span v-fit="26">Tas...</span></div>
            <div class="view-buttons"><svg class="small"><use href="#min" /></svg><svg class="small"><use href="#max" /></svg></div>
          </div>
          <div class="view-tools">
            <svg class="ic"><use href="#balls" /></svg>
            <svg class="ic g8"><use href="#hier" /></svg>
            <div class="pressed g3"><svg class="ic big"><use href="#overview" /></svg></div>
            <svg class="small g11"><use href="#viewmenu" /></svg>
          </div>
          <svg class="mini" viewBox="0 0 199 258">
            <rect width="199" height="230" fill="#fff" />
            <g fill="none" stroke="#000" shape-rendering="crispEdges">
              <path d="M.500 0v82.500h30V0M.500 229.500V99.500h30v130z" />
            </g>
            <path d="M18.500 30v188" stroke="#808080" />
            <path d="M17 64h3M17 121h3M17 176h3M17 212h3" stroke="#777" />
            <g v-for="y in miniCircles" :key="y">
              <circle cx="18.500" :cy="y" r="11" fill="#c1edff" stroke="#000" />
              <path :d="`M15 ${y}h2M19 ${y + 1}h3`" stroke="#8fb6a5" />
            </g>
            <g v-for="y in miniRects" :key="y" shape-rendering="crispEdges">
              <rect x="7.500" :y="y - .5" width="22" height="10" fill="#ef2929" stroke="#000" />
              <path :d="`M16 ${y + 5}h2M19 ${y + 5}h2`" stroke="#803b87" />
            </g>
            <path d="M11 3h2M14 3h7M11 103h2M14 104h6" stroke="#173f42" />
            <rect x=".5" y=".5" width="198" height="120" fill="#0078d7" fill-opacity=".22" stroke="#0078d7" />
          </svg>
        </section>
      </div>

      <section class="editor">
        <div class="editor-tabs">
          <div v-for="e in editors" :key="e.cell" :class="['etab', e.cell]">
            <svg class="ic"><use :href="'#' + e.icon" /></svg><span v-fit="e.width">{{ e.text }}</span>
            <svg v-if="e.cell === 'e4'" class="small"><use href="#close" /></svg>
          </div>
          <div class="editor-buttons"><svg class="small"><use href="#min" /></svg><svg class="small"><use href="#max" /></svg></div>
        </div>
        <div class="editor-body">
          <div class="graph">
            <div class="graph-tools">
              <template v-for="(t, i) in diagramTools" :key="i">
                <i v-if="t.kind === 'sep'" class="sep" :style="{ marginLeft: t.gap + 'px' }"></i>
                <svg v-else :class="['ic', t.kind, { off: t.off }]" :style="{ marginLeft: t.gap + 'px' }"><use :href="'#' + t.kind" /></svg>
              </template>
              <div class="combo"><span v-fit="29">100%</span><svg viewBox="0 0 10 10"><path d="M1 3l4 4 4-4" fill="none" stroke="#444" /></svg></div>
              <i class="sep g2"></i>
              <svg class="ic camera"><use href="#camera" /></svg>
              <svg class="ic g6"><use href="#layout" /></svg>
            </div>
            <div class="graph-view">
              <svg class="canvas" viewBox="0 0 919 558">
                <g fill="none" stroke="#000" shape-rendering="crispEdges">
                  <rect x=".5" y=".5" width="140" height="380" /><rect x=".5" y="460.5" width="140" height="140" />
                </g>
                <g class="net">
                  <svg x="50.500" y="7.500" width="12" height="12"><use href="#starnet" /></svg><text x="67" y="17" textLength="25">Net2</text>
                  <svg x="50.500" y="467.500" width="12" height="12"><use href="#starnet" /></svg><text x="67" y="477" textLength="25">Net1</text>
                </g>
                <path d="M67 18.500h25M67 478.500h25" stroke="#000" shape-rendering="crispEdges" />
                <g fill="#c1edff" stroke="#222">
                  <circle cx="84.700" cy="85" r="49.500" /><circle cx="84.700" cy="325" r="49.500" />
                </g>
                <g shape-rendering="crispEdges">
                  <path d="M35 165h100v50H35zM35 495h100v50H35z" fill="#7c1515" />
                  <path d="M36 166h97v47H36zM36 496h97v47H36z" fill="#ef2929" />
                </g>
                <path d="M85 137v28M85 217v58M85 377v118M85 547v20" stroke="#888" stroke-width="2" />
                <path d="M81.700 141.500l3.300-6 3.300 6M81.700 221.500l3.300-6 3.300 6M81.700 381.500l3.300-6 3.300 6M81.700 551.500l3.300-6 3.300 6" fill="#888" stroke="#888" stroke-width="1.500" />
                <g class="node">
                  <svg x="67.500" y="79.500" width="12" height="12"><use href="#starplace" /></svg><text x="83.500" y="89" textLength="20">NP2</text>
                  <svg x="68.500" y="184.500" width="12" height="12"><use href="#startrans" /></svg><text x="85" y="194" textLength="18">NT1</text>
                  <svg x="67.500" y="319.500" width="12" height="12"><use href="#starplace" /></svg><text x="83.500" y="329" textLength="19">NP1</text>
                  <svg x="72.500" y="514.500" width="12" height="12"><use href="#startrans" /></svg><text x="88.500" y="524" textLength="11">T3</text>
                </g>
              </svg>
              <div class="vscroll">
                <svg viewBox="0 0 16 17"><path d="M4 11l4-4 4 4" fill="none" stroke="#444" stroke-width="1.800" /></svg>
                <i></i>
                <svg viewBox="0 0 16 17"><path d="M4 6l4 4 4-4" fill="none" stroke="#444" stroke-width="1.800" /></svg>
              </div>
            </div>
            <div class="bottom-scroll">
              <svg viewBox="0 0 17 16"><path d="M10.500 4.500L6.500 8l4 3.500" fill="none" stroke="#b5b5b5" stroke-width="1.500" /></svg>
              <svg viewBox="0 0 17 16"><path d="M7 4.500L11 8l-4 3.500" fill="none" stroke="#b5b5b5" stroke-width="1.500" /></svg>
            </div>
          </div>
          <aside class="palette">
            <div class="palette-head">
              <svg class="ic"><use href="#palette" /></svg><span v-fit="37">Palette</span>
              <svg class="small" viewBox="0 0 12 12"><path d="M3.500 1L9 6l-5.500 5z" fill="#fff" stroke="#555" /></svg>
            </div>
            <div class="palette-tools">
              <div class="palette-row">
                <svg v-for="(t, i) in paletteTools" :key="i" :class="['ic', t.kind]" :style="{ marginLeft: t.gap + 'px' }"><use :href="'#' + t.kind" /></svg>
              </div>
              <div class="palette-row second"><svg class="ic"><use href="#pin" /></svg><svg class="ic caret g4"><use href="#caret" /></svg></div>
            </div>
          </aside>
        </div>
      </section>

      <div class="trim">
        <div class="trim-box">
          <svg class="dots" viewBox="0 0 18 3"><path d="M0 0h3v2H0zM5 0h3v2H5zM10 0h3v2h-3zM15 0h3v2h-3z" fill="#aaa59c" /></svg>
          <svg class="small"><use href="#restoretrim" /></svg>
          <svg class="ic"><use href="#clip" /></svg>
          <svg class="ic"><use href="#table" /></svg>
        </div>
      </div>
    </main>

    <footer class="status">
      <b>{?}</b><span v-fit="118">Synchronized diagram</span>
      <svg class="ic grip"><use href="#grip" /></svg>
    </footer>

    <div class="taskbar">
      <div v-for="n in ['win', 'search', 'taskview']" :key="n" class="sys"><svg><use :href="'#' + n" /></svg></div>
      <div class="apps">
        <div v-for="t in tasks" :key="t.icon" :class="['task', { running: t.running, active: t.active, stacked: t.stacked }]">
          <svg :class="t.icon"><use :href="'#' + t.icon" /></svg>
        </div>
      </div>
      <div class="tray">
        <svg class="tray-icons" viewBox="0 0 130 24" fill="none" stroke="#fff" stroke-width="1.200">
          <circle cx="4.500" cy="12" r="2.500" /><path d="M.500 19.500c0-6 8-6 8 0" /><circle cx="10" cy="7.500" r="2.700" /><path d="M8 12.500c3-3 5.700-.5 5.700 2.500" />
          <path d="M37 14.500l5.500-5.500 5.500 5.500" stroke-width="1.400" />
          <path d="M67 4q4 0 8 2v7q0 5-8 8-8-3-8-8V6q4-2 8-2z" fill="#1eb545" stroke="none" /><path d="M63 12l3 3 5.500-5.500" stroke-width="2" />
          <path d="M87 18Q87 8 98 7.500M90 19q0-7 8-8M93 19.500q0-4 5-5" stroke-width="1.200" stroke="#ccc" /><circle cx="97" cy="18" r="1.500" fill="#fff" stroke="none" />
          <path d="M107.500 10h3l4-4v12l-4-4h-3zM117 9q2 3 0 6" /><path d="M119.500 7q4 5 0 10M121 5q5 7 0 14" stroke="#bbb" stroke-width=".9" />
        </svg>
        <span v-fit="19" class="lang">ESP</span>
        <div class="clock"><span v-fit="28">01:40</span><span v-fit="59">05/10/2018</span></div>
        <svg class="notif" viewBox="0 0 28 28"><path d="M2 4h16v12H9l-3 3v-3H2z" fill="#fff" /><path d="M4.500 7h11M4.500 10h11M4.500 13h7" stroke="#363636" stroke-width="1.200" /><circle cx="17.500" cy="18.500" r="8" fill="#363636" stroke="#999" /><text x="14" y="23">2</text></svg>
        <i class="desk"></i>
      </div>
    </div>
  </div>
</template>

<style>
html, body { margin: 0; overflow: hidden; }
</style>

<style scoped>
.window { width: 1366px; height: 768px; overflow: hidden; display: flex; flex-direction: column; background: #e0e5f5; font: 11.500px/18px "Open Sans", "Noto Sans", sans-serif; color: #000; white-space: nowrap; }
.sprite { position: absolute; width: 0; height: 0; }
svg { flex: none; display: block; }
span { display: inline-block; flex: none; }
.ic { width: 16px; height: 16px; }
.ic.caret { width: 8px; }
.ic.grip { width: 3px; }
.ic.off.caret { opacity: .6; }
.ic.off.paste { opacity: .8; }
.ic.big { width: 18px; height: 18px; }
.small { width: 12px; height: 12px; }
.sep { width: 1px; height: 18px; background: #8f8f8f; flex: none; }
.g2 { margin-left: 2px; } .g3 { margin-left: 3px; } .g4 { margin-left: 4px; } .g6 { margin-left: 6px; } .g7 { margin-left: 7px; }
.g8 { margin-left: 8px; } .g9 { margin-left: 9px; } .g11 { margin-left: 11px; } .g14 { margin-left: 14px; }

.title { height: 23px; background: #fff; display: flex; align-items: center; padding-left: 4px; flex: none; }
.app-icon { width: 14px; height: 14px; margin-right: 5px; }
.win-buttons { width: 110px; height: 20px; margin-left: auto; margin-right: 12px; }
.menu { height: 18px; background: #fff; border-bottom: 2px solid #f0f0f0; display: flex; gap: 14px; padding-left: 7px; flex: none; align-items: center; }
.menu span { margin-top: 2px; }

.main-bar { height: 32px; display: flex; flex: none; justify-content: space-between; background: linear-gradient(#f7f8fd, #e1e6f5); }
.tools { display: flex; align-items: center; padding-left: 1px; }
.right-tools { display: flex; align-items: center; }
.quick { width: 74px; height: 19px; border: 1px solid #6f6f6f; background: #fff; color: #555; font-size: 12px; line-height: 19px; text-align: center; margin-right: 6px; }
.perspectives { height: 32px; margin-left: 3px; padding: 0 11px 0 8px; border-left: 1px solid #aeb4c8; border-bottom-left-radius: 3px; display: flex; align-items: center; }
.perspectives .sep { margin: 0 5px 0 6px; }
.perspectives .ic { margin-top: 2px; }
.pressed { width: 21px; height: 19px; border: 1px solid #92c6f3; background: #cce6fb; display: flex; align-items: center; justify-content: center; }
.perspectives .pressed { margin-right: 4px; }

.work { height: 627px; flex: none; display: flex; }
.left { width: 205px; margin: 0 4px 0 1px; display: flex; flex-direction: column; gap: 4px; }
.view { background: #fff; border-radius: 7px; overflow: hidden; box-sizing: border-box; border: 1px solid #fff; display: flex; flex-direction: column; }
.explorer { height: 312px; }
.outline { height: 311px; }
.view-tabs { height: 26px; background: #f5f6fc; display: flex; flex: none; }
.view-tab { display: flex; align-items: center; padding-left: 3px; box-sizing: border-box; }
.view-tab.active { background: linear-gradient(#d6e2ed, #fff); border-radius: 5px 8px 0 0; }
.t-explorer { width: 131px; }
.t-outline { width: 82px; }
.view-tab span { margin-left: 5px; margin-right: 7px; }
.t-explorer span { margin-left: 5px; }
.t-outline span { margin-left: 5px; margin-right: 8px; }
.view-tab.dim { color: #858585; padding-left: 5px; }
.view-tab.dim span { margin: 0 0 0 4px; }
.view-buttons { margin-left: auto; display: flex; gap: 11px; padding: 6px 13px 0 0; }
.view-tools { height: 24px; display: flex; align-items: center; justify-content: flex-end; padding-right: 10px; flex: none; }
.view-tools .small { margin-top: -5px; }
.outline .view-tools { height: 23px; }
.outline .pressed { height: 19px; }

.rows { width: 201px; height: 242px; overflow: hidden; margin-top: -1px; }
.row { height: 18px; display: flex; align-items: center; }
.d0 { padding-left: 7.500px; } .d1 { padding-left: 26.500px; } .d2 { padding-left: 45.500px; } .d3 { padding-left: 64.500px; }
.twisty { width: 10px; height: 10px; margin-right: 4.500px; }
.label { display: flex; align-items: center; padding-left: 2px; height: 18px; flex: 1 0 auto; }
.label .ic { margin-right: 5px; }
.link { color: #2f5583; }
.selected { background: #d9d9d9; }
.hscroll { display: flex; background: #f0f0f0; height: 16px; width: 199px; margin: 1px 0 0 2px; flex: none; justify-content: space-between; }
.hscroll svg { width: 17px; height: 16px; }
.hscroll .thumb { width: 139px; background: #cdcdcd; margin-right: 26px; }
.mini { width: 199px; height: 258px; background: #f7f7f7; margin-left: 2px; }

.editor { width: 1122px; height: 627px; box-sizing: border-box; border: 1px solid #b9bfcd; border-radius: 8px 8px 7px 7px; background: #fff; overflow: hidden; display: flex; flex-direction: column; }
.editor-tabs { height: 24px; background: #d0dfee; border-bottom: 1px solid #aab3c6; display: flex; flex: none; }
.etab { display: flex; align-items: center; box-sizing: border-box; padding-left: 4px; height: 26px; color: #1d2b44; }
.etab span { margin-left: 4px; }
.e1 { width: 176px; } .e2 { width: 136px; } .e3 { width: 145px; }
.e2 span { margin-left: 3px; }
.e3 span { margin-left: 3px; }
.e4 { width: 184px; background: #fff; border: 1px solid #b9c2d2; border-bottom: 0; border-radius: 7px 7px 0 0; height: 25px; }
.e4.etab { padding-left: 3px; }
.e4.etab span { margin-left: 3px; }
.e4 .small { margin-left: 7px; }
.editor-buttons { margin-left: auto; display: flex; gap: 11px; padding: 6px 14px 0 0; }
.editor-body { display: flex; flex: 1; padding: 2px 2px 2px 2px; }
.graph { width: 936px; display: flex; flex-direction: column; }
.graph-tools { height: 21px; border-bottom: 1px solid #a7a7a7; background: linear-gradient(90deg, #f3f3f3, #fff); display: flex; align-items: center; }
.combo { height: 21px; border: 1px solid #7a7a7a; border-bottom: 0; background: #fff; display: flex; align-items: center; margin-left: 3px; box-sizing: border-box; width: 64px; padding: 0 4px; justify-content: space-between; }
.combo svg { width: 10px; height: 10px; }
.ic.camera { width: 18px; margin-left: 7px; }
.graph-view { display: flex; height: 558px; }
.canvas { width: 919px; height: 558px; }
.net text { font: italic bold 11px "Open Sans", sans-serif; }
.node text { font: 11px "Open Sans", sans-serif; fill: #222; }
.vscroll { width: 16px; background: #f0f0f0; display: flex; flex-direction: column; }
.vscroll svg { width: 16px; height: 17px; }
.vscroll i { height: 275px; background: #cdcdcd; margin-bottom: auto; }
.bottom-scroll { height: 16px; width: 935px; background: #f0f0f0; display: flex; justify-content: space-between; box-sizing: border-box; padding-right: 17px; }
.bottom-scroll svg { width: 17px; height: 16px; }
.palette { flex: 1; margin-left: 1px; border-left: 1px solid #8f8f8f; }
.palette-head { height: 23px; border-bottom: 1px solid #999; display: flex; align-items: center; padding: 0 7px 0 4px; background: linear-gradient(#fff, #f1f1f1); }
.palette-head span { margin-left: 2px; margin-right: auto; }
.palette-tools { background: #f0f0f0; border-bottom: 1px solid #d0d0d0; height: 42px; box-sizing: border-box; padding-top: 1px; }
.palette-row { display: flex; height: 20px; align-items: center; padding-left: 2px; }
.palette-row .cursor { border: 1px solid #a0a0a0; border-color: #a0a0a0 #fff #fff #a0a0a0; background: #f8f8f8; }
.palette-row.second { padding-left: 4px; }
.palette-row .caret { width: 6px; }
.trim { flex: 1; display: flex; padding-left: 2px; align-items: flex-start; }
.trim-box { width: 28px; height: 78px; border: 1px solid #fff; outline: 1px solid #c7cee3; outline-offset: -2px; border-radius: 7px; display: flex; flex-direction: column; align-items: center; margin-top: 1px; }
.dots { width: 18px; height: 3px; margin-top: 5px; }
.trim-box .small { margin-top: 6px; }
.trim-box .ic { margin-top: 7px; }
.trim-box .ic + .ic { margin-top: 5px; }

.status { height: 18px; flex: none; display: flex; align-items: center; padding-left: 4px; line-height: 22px; }
.status b { color: #5f7fb3; font-size: 12px; width: 15px; letter-spacing: -.3px; margin-top: 4px; }
.status span { margin-left: 5px; margin-top: 6px; }
.status .grip { margin-left: 939px; margin-top: 8px; }

.taskbar { height: 48px; flex: none; display: flex; color: #fff; background: linear-gradient(90deg, #10212a, #1b2225 35%, #2c2d2e 60%, #363636 80%); }
.sys { width: 48px; display: flex; align-items: center; justify-content: center; }
.sys svg { width: 24px; height: 24px; }
.apps { display: flex; margin-left: 2px; }
.task { width: 49px; height: 48px; display: flex; align-items: center; justify-content: center; position: relative; }
.task svg { width: 24px; height: 24px; }
.task svg.skype { width: 26px; height: 26px; }
.task.running::after { content: ""; position: absolute; left: 5px; bottom: 0; width: 40px; height: 2px; background: #76b9ed; }
.task.stacked::after { background: linear-gradient(90deg, #76b9ed 80%, #5288ae 80%); }
.task.active { background: linear-gradient(90deg, #474e51 0 44px, #2b3132 44px 45px, #41474a 45px); }
.task.active::after { left: 0; width: 49px; }
.tray { margin-left: auto; display: flex; align-items: center; }
.tray-icons { width: 130px; height: 24px; margin-top: 6px; }
.lang { margin-left: 5px; margin-top: 6px; }
.clock { width: 60px; margin-left: 14px; display: flex; flex-direction: column; align-items: center; line-height: 18px; margin-top: 4px; }
.notif { width: 28px; height: 28px; margin-left: 14px; margin-top: 8px; }
.notif text { font: bold 12px "Open Sans", sans-serif; fill: #fff; }
.desk { width: 1px; height: 48px; background: #777; margin: 0 4px 0 11px; }
</style>
